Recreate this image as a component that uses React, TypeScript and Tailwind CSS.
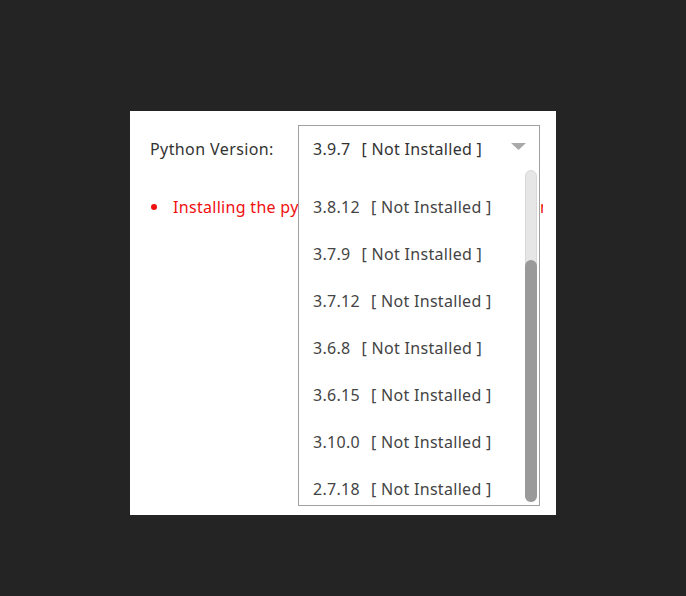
import React from 'react';

const versions = ['3.10.6', '3.9.7', '3.8.12', '3.7.9', '3.7.12', '3.6.8', '3.6.15', '3.10.0', '2.7.18'];

export default function App() {
  return (
    <div className="w-[686px] h-[596px] bg-[#242424] pt-[111px] pl-[130px]" style={{ fontFamily: '"Noto Sans", "Open Sans", sans-serif' }}>
      <div className="relative w-[426px] h-[404px] bg-white">
        {/* version row */}
        <div className="flex items-center pt-[14px]">
          <div className="w-[168px] pl-[20px] pt-[2px] text-[16px] tracking-[0.4px] text-[#333]">Python Version:</div>
          <div className="relative w-[242px] h-[46px] border border-[#a0a0a0] bg-white flex items-center pl-[14px] pt-[2px] text-[16px] tracking-[0.3px] text-[#333]">
            <span>3.9.7</span>
            <span className="ml-[11px]">[ Not Installed ]</span>
            <svg className="absolute right-[13px] top-[17px]" width="15" height="7" viewBox="0 0 15 7">
              <path d="M0 0 L15 0 L7.5 7 Z" fill="#a9a9a9" />
            </svg>
          </div>
        </div>

        {/* notice */}
        <div className="flex items-center mt-[24px] pl-[20px] text-[16px] tracking-[0.3px] text-[#f01010] whitespace-nowrap">
          <span className="w-[6px] h-[6px] rounded-full bg-[#f01010] ml-[1px] mr-[16px]" />
          <span className="w-[370px] overflow-hidden">Installing the python version may take a long time, please be patien</span>
        </div>

        {/* dropdown list */}
        <div className="absolute left-[168px] top-[58px] w-[242px] h-[337px] border border-[#a0a0a0] border-t-0 bg-white overflow-hidden">
          <div className="mt-[-79.5px] pr-[16px]">
            {versions.map((v) => (
              <div key={v} className="h-[47px] flex items-center pl-[14px] text-[16px] tracking-[0.3px] text-[#444] whitespace-nowrap">
                <span>{v}</span>
                <span className="ml-[11px]">[ Not Installed ]</span>
              </div>
            ))}
          </div>
          <div className="absolute right-[2px] top-[1px] bottom-[3px] w-[12px] rounded-full bg-[#e6e6e6] border border-[#d8d8d8]">
            <div className="absolute left-[-1px] right-[-1px] top-[89px] bottom-[-1px] rounded-full bg-[#9a9a9a]" />
          </div>
        </div>
      </div>
    </div>
  );
}
